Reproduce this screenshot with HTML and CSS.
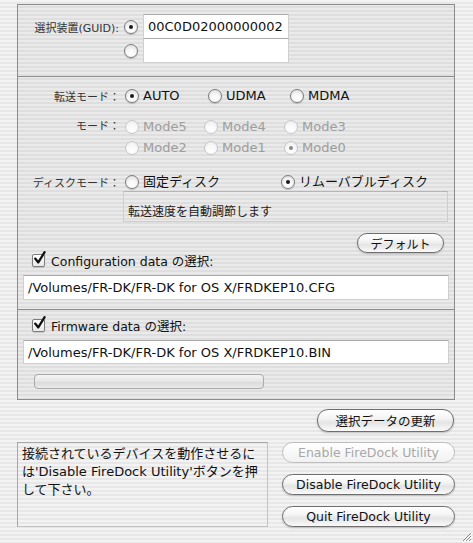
FILE: index.html
```html
<!DOCTYPE html>
<html lang="ja">
<head>
    <meta charset="UTF-8">
    <link rel="stylesheet" href="styles.css">
    <title>FireDock Utility</title>
</head>
<body>
<div class="window">
    <div class="group">
        <div class="section guid">
            <div class="guid-grid">
                <span class="label">選択装置(GUID):</span>
                <span class="radio on"></span>
                <div class="field">00C0D02000000002</div>
                <span></span>
                <span class="radio"></span>
                <div class="field second"></div>
            </div>
        </div>

        <div class="section settings">
            <div class="row">
                <span class="label">転送モード：</span>
                <div class="choices transfer">
                    <span class="choice"><span class="radio on"></span>AUTO</span>
                    <span class="choice"><span class="radio"></span>UDMA</span>
                    <span class="choice"><span class="radio"></span>MDMA</span>
                </div>
            </div>
            <div class="row modes">
                <span class="label">モード：</span>
                <div class="choices mode-grid">
                    <span class="choice off"><span class="radio"></span>Mode5</span>
                    <span class="choice off"><span class="radio"></span>Mode4</span>
                    <span class="choice off"><span class="radio"></span>Mode3</span>
                    <span class="choice off"><span class="radio"></span>Mode2</span>
                    <span class="choice off"><span class="radio"></span>Mode1</span>
                    <span class="choice off"><span class="radio on"></span>Mode0</span>
                </div>
            </div>
            <div class="row disk">
                <span class="label">ディスクモード：</span>
                <div class="choices disk-grid">
                    <span class="choice"><span class="radio"></span>固定ディスク</span>
                    <span class="choice"><span class="radio on"></span>リムーバブルディスク</span>
                </div>
            </div>
            <div class="status">転送速度を自動調節します</div>
            <div class="button small default-btn">デフォルト</div>
            <div class="check-row">
                <span class="checkbox">
                    <svg width="16" height="16" viewBox="0 0 16 16"><path d="M3.2 7.6 L6.3 11.4 L12.6 1.2" fill="none" stroke="#111" stroke-width="2.3" stroke-linecap="round" stroke-linejoin="round"/></svg>
                </span>
                Configuration data の選択:
            </div>
            <div class="field path">/Volumes/FR-DK/FR-DK for OS X/FRDKEP10.CFG</div>
        </div>

        <div class="section firmware">
            <div class="check-row">
                <span class="checkbox">
                    <svg width="16" height="16" viewBox="0 0 16 16"><path d="M3.2 7.6 L6.3 11.4 L12.6 1.2" fill="none" stroke="#111" stroke-width="2.3" stroke-linecap="round" stroke-linejoin="round"/></svg>
                </span>
                Firmware data の選択:
            </div>
            <div class="field path short">/Volumes/FR-DK/FR-DK for OS X/FRDKEP10.BIN</div>
            <div class="progress"></div>
        </div>
    </div>

    <div class="button update-btn">選択データの更新</div>

    <div class="bottom">
        <div class="message">接続されているデバイスを動作させるに<br>は'Disable FireDock Utility'ボタンを押<br>して下さい。</div>
        <div class="actions">
            <div class="button disabled">Enable FireDock Utility</div>
            <div class="button">Disable FireDock Utility</div>
            <div class="button">Quit FireDock Utility</div>
        </div>
    </div>

    <svg class="grip" width="11" height="11" viewBox="0 0 11 11">
        <path d="M10 2 L2 10 M10 5 L5 10 M10 8 L8 10" stroke="#8a8a8a" stroke-width="1"/>
        <path d="M11 3 L3 11 M11 6 L6 11 M11 9 L9 11" stroke="#fff" stroke-width="1"/>
    </svg>
</div>
</body>
</html>
```

FILE: styles.css
```css
body {
    margin: 0;
    width: 473px;
    height: 543px;
    overflow: hidden;
    font-family: "DejaVu Sans", "Noto Sans CJK JP", sans-serif;
    font-size: 13px;
    color: #111;
    background: repeating-linear-gradient(to bottom, #f3f3f3 0, #f3f3f3 2px, #e7e7e7 2px, #e7e7e7 4px);
}

.window {
    position: relative;
    height: 543px;
    box-sizing: border-box;
    padding: 4px 18px 0 17px;
    display: flex;
    flex-direction: column;
}

.group {
    height: 396px;
    box-sizing: border-box;
    border: 1px solid #8c8c8c;
    background: rgba(0, 0, 0, 0.035);
    display: flex;
    flex-direction: column;
}

.section {
    box-sizing: border-box;
    display: flex;
    flex-direction: column;
}

.guid {
    height: 72px;
    padding-top: 9px;
    border-bottom: 1px solid #8c8c8c;
}

.settings {
    height: 233px;
    padding-top: 9px;
    border-bottom: 1px solid #8c8c8c;
}

.firmware {
    flex: 1;
    padding-top: 8px;
}

.label {
    width: 102px;
    margin-right: 5px;
    text-align: right;
    font-size: 11px;
    color: #333;
    flex: none;
}

.guid-grid {
    display: grid;
    grid-template-columns: 102px 14px 147px;
    grid-template-rows: 25px 24px;
    column-gap: 4px;
    align-items: center;
}

.guid-grid .label {
    margin-right: 0;
    width: auto;
    padding-right: 1px;
}

.guid-grid .field {
    height: 100%;
    margin-left: 1px;
}

.field {
    box-sizing: border-box;
    background: #fff;
    border: 1px solid #cfcfcf;
    border-top-color: #a9a9a9;
    display: flex;
    align-items: center;
    padding-left: 4px;
    font-size: 13px;
    white-space: nowrap;
}

.field.second {
    margin-top: -1px;
    height: calc(100% + 1px);
}

.row {
    display: flex;
    align-items: center;
    height: 20px;
}

.modes {
    height: 42px;
    margin-top: 10px;
    align-items: flex-start;
}

.modes .label {
    line-height: 21px;
}

.disk {
    height: 16px;
    margin-top: 16px;
}

.choices {
    display: grid;
    align-items: center;
}

.transfer {
    grid-template-columns: 83px 82px auto;
}

.mode-grid {
    grid-template-columns: 79px 80px auto;
    grid-auto-rows: 21px;
}

.disk-grid {
    grid-template-columns: 156px auto;
}

.choice {
    display: flex;
    align-items: center;
    gap: 4px;
    white-space: nowrap;
    line-height: 16px;
}

.choice.off {
    color: #9d9d9d;
}

.radio {
    position: relative;
    width: 14px;
    height: 14px;
    box-sizing: border-box;
    border-radius: 50%;
    border: 1px solid #7d7d7d;
    background: radial-gradient(circle at 50% 75%, #ffffff 0, #f6f6f6 45%, #d6d6d6 100%);
    box-shadow: 0 1px 1px rgba(0, 0, 0, 0.18);
    flex: none;
}

.radio.on::after {
    content: "";
    position: absolute;
    left: 4px;
    top: 4px;
    width: 4px;
    height: 4px;
    border-radius: 50%;
    background: #1a1a1a;
}

.off .radio {
    border-color: #c6c6c6;
    background: radial-gradient(circle at 50% 75%, #ffffff 0, #f8f8f8 50%, #e6e6e6 100%);
    box-shadow: none;
}

.off .radio.on::after {
    background: #8a8a8a;
}

.status {
    box-sizing: border-box;
    height: 31px;
    margin: 1px 6px 0 105px;
    padding: 13px 0 0 4px;
    border: 1px solid #cdcdcd;
    border-top-color: #b5b5b5;
    font-size: 12px;
    line-height: 14px;
    color: #222;
}

.button {
    box-sizing: border-box;
    height: 21px;
    border: 1px solid #6e6e6e;
    border-radius: 11px;
    background: linear-gradient(to bottom, #ffffff 0%, #f4f4f4 40%, #e4e4e4 60%, #fafafa 100%);
    box-shadow: 0 1px 2px rgba(0, 0, 0, 0.22);
    display: flex;
    align-items: center;
    justify-content: center;
    font-size: 12.5px;
    color: #111;
    white-space: nowrap;
}

.button.disabled {
    border-color: #bdbdbd;
    color: #a8a8a8;
    box-shadow: none;
    background: linear-gradient(to bottom, #ffffff 0%, #f8f8f8 50%, #f1f1f1 100%);
}

.default-btn {
    align-self: flex-end;
    width: 87px;
    height: 20px;
    margin: 11px 10px 0 0;
    font-size: 12px;
}

.check-row {
    display: flex;
    align-items: center;
    height: 14px;
    padding-left: 14px;
    gap: 6px;
    font-size: 12.5px;
    color: #111;
}

.checkbox {
    position: relative;
    width: 13px;
    height: 13px;
    box-sizing: border-box;
    border: 1px solid #7d7d7d;
    border-radius: 2px;
    background: linear-gradient(to bottom, #ffffff, #e9e9e9);
    box-shadow: 0 1px 1px rgba(0, 0, 0, 0.15);
    flex: none;
}

.checkbox svg {
    position: absolute;
    left: -1px;
    top: -4px;
}

.path {
    height: 25px;
    margin: 8px 5px 0 5px;
}

.path.short {
    height: 24px;
}

.progress {
    box-sizing: border-box;
    width: 230px;
    height: 15px;
    margin: 10px 0 0 16px;
    border: 1px solid #a9a9a9;
    border-radius: 4px;
    background: linear-gradient(to bottom, #f4f4f4 0%, #e6e6e6 50%, #d9d9d9 51%, #e9e9e9 100%);
}

.update-btn {
    align-self: flex-end;
    width: 137px;
    height: 23px;
    margin: 9px 1px 0 0;
    font-size: 12.5px;
}

.bottom {
    display: flex;
    margin-top: 10px;
}

.message {
    box-sizing: border-box;
    width: 251px;
    height: 85px;
    padding: 2px 0 0 4px;
    border: 1px solid #c2c2c2;
    border-top-color: #a8a8a8;
    border-left-color: #a8a8a8;
    font-size: 13px;
    line-height: 18px;
    white-space: nowrap;
    color: #111;
}

.actions {
    width: 173px;
    margin-left: 14px;
    display: flex;
    flex-direction: column;
    gap: 11px;
}

.grip {
    position: absolute;
    right: 1px;
    bottom: 1px;
}
```
